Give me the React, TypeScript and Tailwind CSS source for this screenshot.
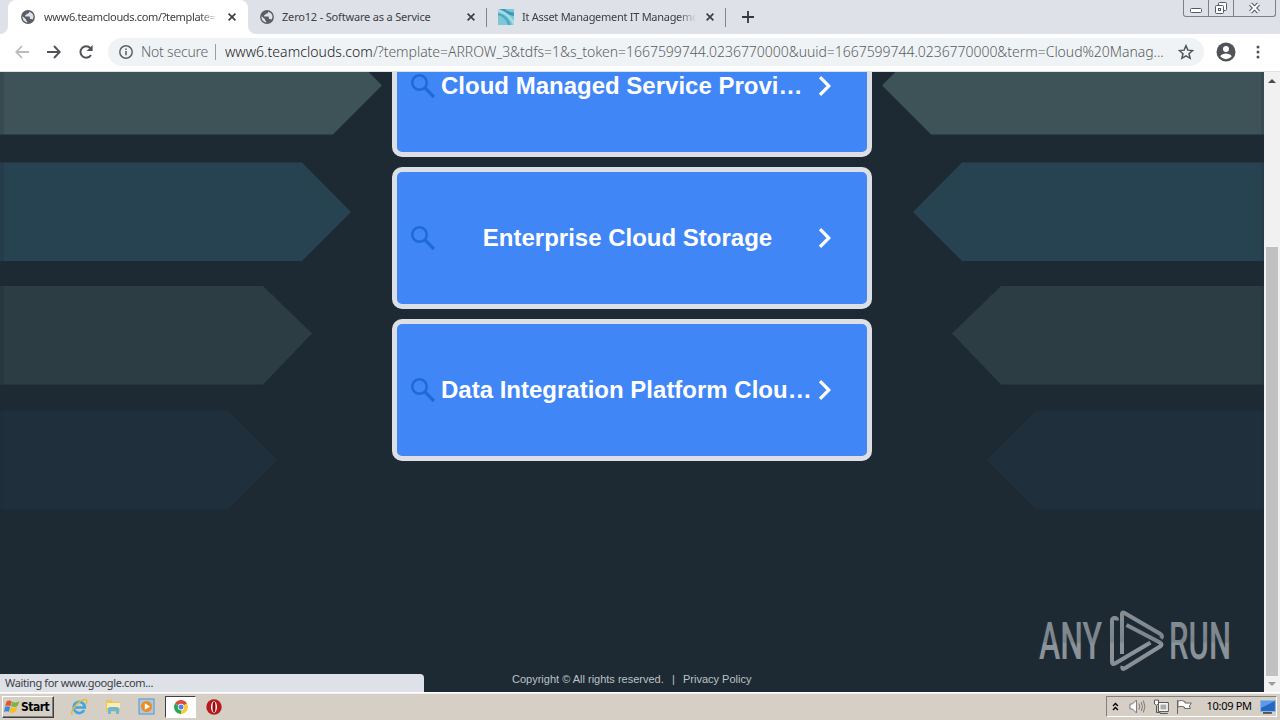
import { ReactNode } from "react";

const SHAPES = [
  { top: 36, bottom: 134.5, mid: 85.5, tip: 382, shoulder: 333, fill: "#3d5357" },
  { top: 162.5, bottom: 261, mid: 212, tip: 351, shoulder: 302, fill: "#274351" },
  { top: 286, bottom: 384.500, mid: 333.5, tip: 312, shoulder: 263, fill: "#2c3d43" },
  { top: 410.5, bottom: 509.5, mid: 460, tip: 277, shoulder: 228, fill: "#1f303c" }
];

const CARDS = [
  { title: "Cloud Managed Service Provi…", align: "text-left" },
  { title: "Enterprise Cloud Storage", align: "text-center" },
  { title: "Data Integration Platform Clou…", align: "text-left" }
];

function GlobeIcon() {
  return (
    <svg width="14" height="14" viewBox="0 0 14 14" className="shrink-0">
      <circle cx="7" cy="7" r="6.9" fill="#5a5e63" />
      <path d="M1.6 6.2 5 9.2v1l1.2 1v1.2C3.6 12.2 1.500 9.800 1.500 7zM8 1.700v.8c0 .8-.6 1.200-1.300 1.200H5.400v1.400H4.200v1.300h3.700c.7 0 1 .4 1 1V9h1.300c.5 0 .9.300 1.100.8.800-.9 1.200-2 1.200-3 0-2.400-1.900-4.700-4.500-5.100z" fill="#dfe2e8" />
    </svg>
  );
}

function CloseIcon() {
  return (
    <svg width="8" height="8" viewBox="0 0 8 8" className="shrink-0">
      <path d="M.6.600 7.400 7.400M7.400.600.600 7.400" stroke="#3c4043" strokeWidth="1.7" />
    </svg>
  );
}

function TabTitle({ children, className }: { children: ReactNode; className: string }) {
  return <span className={`overflow-hidden whitespace-nowrap text-[11px] text-[#3c4043] ${className}`}>{children}</span>;
}

function TabStrip() {
  return (
    <div className="flex h-[34px] bg-[#dee1e8]">
      <div className="flex w-2 items-end bg-white">
        <div className="h-full w-2 rounded-br-lg bg-[#dee1e8]" />
      </div>
      <div className="flex w-[240px] items-center rounded-t-lg bg-white pl-[13px]">
        <GlobeIcon />
        <TabTitle className="ml-[9px] w-[173px] tracking-[-0.35px] [mask-image:linear-gradient(90deg,#000_90%,transparent)]">
          www6.teamclouds.com/?template=ARROW_3
        </TabTitle>
        <span className="ml-[11px] flex">
          <CloseIcon />
        </span>
      </div>
      <div className="flex w-2 bg-white">
        <div className="h-full w-2 rounded-bl-lg bg-[#dee1e8]" />
      </div>
      <div className="flex w-[230px] items-center pl-1">
        <GlobeIcon />
        <TabTitle className="ml-[8px] w-[185px] tracking-[-0.18px]">Zero12 - Software as a Service</TabTitle>
        <CloseIcon />
      </div>
      <div className="mt-2 h-[19px] w-px bg-[#80848b]" />
      <div className="flex w-[238px] items-center pl-[11px]">
        <svg width="16" height="16" viewBox="0 0 16 16" className="shrink-0">
          <path d="M0 0h16v16H0z" fill="#7cc8d6" />
          <path d="M2 0c3 4 8 6 14 7V3.500C12 3 9 2 7 0z" fill="#3b9ab8" />
          <path d="M0 3c7 1 12 6 15 13h1v-4C12 6 7 2 0 0z" fill="#a9dce4" />
          <path d="M0 4c6 1 11 6 13 12h-3C8 10 5 7 0 6.500z" fill="#4aa9c3" />
        </svg>
        <TabTitle className="ml-[8px] w-[174px] tracking-[-0.28px] [mask-image:linear-gradient(90deg,#000_90%,transparent)]">
          It Asset Management IT Management
        </TabTitle>
        <span className="ml-[10px] flex">
          <CloseIcon />
        </span>
      </div>
      <div className="mt-2 h-[19px] w-px bg-[#80848b]" />
      <svg width="12" height="12" viewBox="0 0 12 12" className="mt-[11px] ml-4">
        <path d="M6 0v12M0 6h12" stroke="#34373c" strokeWidth="1.8" />
      </svg>
      <div className="mr-1 ml-auto flex h-[17px] w-[93px] self-start rounded-b-[3px] border border-t-0 border-[#7b808a]">
        <div className="flex w-[25px] justify-center border-r border-[#7b808a]">
          <svg width="12" height="16" viewBox="0 0 12 16">
            <rect x=".5" y="8.500" width="11" height="4" rx="1" fill="#fff" stroke="#555a64" />
          </svg>
        </div>
        <div className="flex w-[25px] justify-center border-r border-[#7b808a]">
          <svg width="14" height="16" viewBox="0 0 14 16">
            <rect x="4.500" y="2.500" width="8" height="8" rx="1" fill="#fff" stroke="#555a64" />
            <rect x="1.500" y="5.500" width="8" height="8" rx="1" fill="#fff" stroke="#555a64" />
            <rect x="4.500" y="8.500" width="2" height="2" fill="#fff" stroke="#555a64" />
          </svg>
        </div>
        <div className="flex grow justify-center">
          <svg width="13" height="16" viewBox="0 0 13 16">
            <path d="M2.500 4 10.500 12M10.500 4 2.500 12" stroke="#555a64" strokeWidth="4" />
            <path d="M2.500 4 10.500 12M10.500 4 2.500 12" stroke="#fff" strokeWidth="2" />
          </svg>
        </div>
      </div>
    </div>
  );
}

function Toolbar() {
  return (
    <div className="flex h-[38px] items-center border-b border-[#dfe2e5] bg-white pb-px">
      <svg width="14" height="14" viewBox="0 0 14 14" className="ml-[15px]" fill="none" stroke="#b9bbbe" strokeWidth="1.8">
        <path d="M14 7H1.500M7 1 1.300 7 7 13" />
      </svg>
      <svg width="14" height="14" viewBox="0 0 14 14" className="ml-[18px]" fill="none" stroke="#505357" strokeWidth="1.9">
        <path d="M0 7h12.500M7 1l5.700 6L7 13" />
      </svg>
      <svg width="16" height="16" viewBox="0 0 16 16" className="ml-[17px]">
        <path d="M13 11a5.700 5.700 0 1 1-.6-6.800" fill="none" stroke="#505357" strokeWidth="2" />
        <path d="M14.600 1v6H8.600z" fill="#505357" />
      </svg>
      <div className="ml-[14px] flex h-7 w-[1096px] items-center rounded-full bg-[#f0f3f5] pl-[11px]">
        <svg width="14" height="14" viewBox="0 0 14 14" fill="none" stroke="#5f6368" strokeWidth="1.5">
          <circle cx="7" cy="7" r="6.200" />
          <path d="M7 6v4.300M7 3.500v1.500" strokeWidth="1.600" />
        </svg>
        <span className="ml-2 w-[67px] pb-px text-[14px] font-light tracking-[-0.2px] whitespace-nowrap text-[#5f6368]">Not secure</span>
        <div className="ml-[7px] h-4 w-px bg-[#9a9da1]" />
        <span className="ml-[9px] w-[945px] pb-px text-[14px] font-light tracking-[-0.035px] whitespace-nowrap text-[#5a5e63]">
          <span className="tracking-[0.04px] text-[#202124]">www6.teamclouds.com</span>
          /?template=ARROW_3&amp;tdfs=1&amp;s_token=1667599744.0236770000&amp;uuid=1667599744.0236770000&amp;term=Cloud%20Manag...
        </span>
        <svg width="16" height="16" viewBox="0 0 24 24" className="ml-[8px]" fill="none" stroke="#505357" strokeWidth="2.200">
          <path d="m12 2.500 2.800 6.700 7.200.6-5.500 4.700 1.700 7L12 17.800l-6.200 3.700 1.700-7L2 9.800l7.200-.6z" />
        </svg>
      </div>
      <svg width="20" height="20" viewBox="0 0 20 20" className="ml-[12px]">
        <circle cx="10" cy="10" r="9.500" fill="#505357" />
        <circle cx="10" cy="7" r="3" fill="#fff" />
        <path d="M4.200 14.300c1.200-1.800 3.500-2.800 5.800-2.800s4.600 1 5.800 2.800A7 7 0 0 1 10 17.200a7 7 0 0 1-5.800-2.900z" fill="#fff" />
      </svg>
      <svg width="4" height="14" viewBox="0 0 4 14" className="ml-[20px]" fill="#505357">
        <circle cx="2" cy="2" r="1.500" />
        <circle cx="2" cy="7" r="1.500" />
        <circle cx="2" cy="12" r="1.500" />
      </svg>
    </div>
  );
}

function Backdrop() {
  return (
    <svg width="1264" height="620" viewBox="0 72 1264 620" className="[grid-area:1/1]">
      {SHAPES.map((s) => (
        <g key={s.top} fill={s.fill}>
          <path d={`M0 ${s.top}H${s.shoulder}L${s.tip} ${s.mid} ${s.shoulder} ${s.bottom}H0z`} />
          <path d={`M1264 ${s.top}H${1264 - s.shoulder}L${1264 - s.tip} ${s.mid} ${1264 - s.shoulder} ${s.bottom}H1264z`} />
          <path
            d={`M0 ${s.top}h4v${s.bottom - s.top}h-4zM1261 ${s.top}h3v${s.bottom - s.top}h-3z`}
            fill="#1e2a33"
            opacity=".2"
          />
        </g>
      ))}
    </svg>
  );
}

function Card({ title, align }: { title: string; align: string }) {
  return (
    <a className="flex h-[142px] w-[480px] shrink-0 items-center rounded-[10px] border-[5px] border-[#dcdfe6] bg-[#4086f6] pl-[13px]">
      <svg width="26" height="27" viewBox="0 0 26 27" fill="none" stroke="#2069d8" className="shrink-0">
        <circle cx="9.500" cy="9.500" r="7.300" strokeWidth="2.600" />
        <path d="m15 15 9 9" strokeWidth="3.200" />
      </svg>
      <span className={`ml-[5px] w-[373px] whitespace-nowrap font-['Liberation_Sans',sans-serif] text-2xl font-bold text-white ${align}`}>
        {title}
      </span>
      <svg width="14" height="20" viewBox="0 0 14 20" fill="none" stroke="#fff" strokeWidth="3.200" className="ml-[4px] shrink-0">
        <path d="m2 1.200 8.800 8.800L2 18.800" />
      </svg>
    </a>
  );
}

function Watermark() {
  return (
    <svg width="200" height="68" viewBox="1035 606 200 68" className="mt-[534px] mr-[29px] self-start justify-self-end [grid-area:1/1]">
      <defs>
        <linearGradient id="wm" x1="0" y1="606" x2="0" y2="674" gradientUnits="userSpaceOnUse">
          <stop offset=".2" stopColor="#858d93" />
          <stop offset=".52" stopColor="#79838a" />
          <stop offset=".56" stopColor="#8d959b" />
          <stop offset="1" stopColor="#858d93" />
        </linearGradient>
      </defs>
      <g fill="url(#wm)" fontFamily="Roboto, sans-serif" fontSize="52" fontWeight="500">
        <text x="1039" y="659" textLength="63" lengthAdjust="spacingAndGlyphs">ANY</text>
        <text x="1169" y="659" textLength="62" lengthAdjust="spacingAndGlyphs">RUN</text>
      </g>
      <g fill="none" stroke="url(#wm)" strokeWidth="4" strokeLinejoin="round">
        <path d="M1122 654V614Q1122 611.500 1124.500 613L1160.500 634Q1163 636 1161 638.500" />
        <path d="M1117 620.500Q1117 617.500 1114 618 1112 618.500 1112 621V662Q1112 665 1115 663.500L1150.500 642.500" />
        <path d="M1126.500 625 1160 642.500Q1163 644.500 1160 646.500L1124.500 668.500Q1121.500 670 1122.500 666" />
      </g>
    </svg>
  );
}

function Page() {
  return (
    <div className="flex h-[620px]">
      <main className="grid w-[1264px] grid-cols-1 grid-rows-1 overflow-hidden bg-[#1e2a33]">
        <Backdrop />
        <div className="flex h-[620px] flex-col items-center overflow-hidden [grid-area:1/1]">
          <div className="-mt-[57px] flex flex-col gap-[10px]">
            {CARDS.map((c) => (
              <Card key={c.title} title={c.title} align={c.align} />
            ))}
          </div>
          <footer className="mt-auto mb-[5px] flex h-4 w-[240px] items-center whitespace-nowrap font-['Liberation_Sans',sans-serif] text-[11px] text-[#bcc2c7]">
            <span className="w-[160px]">Copyright © All rights reserved.</span>
            <span className="w-[11px]">|</span>
            <span>Privacy Policy</span>
          </footer>
        </div>
        <Watermark />
        <div className="z-10 h-[18px] w-[424px] self-end rounded-tr-[4px] bg-[#dee1e8] pl-[5px] text-[11px] leading-[18px] tracking-[-0.36px] text-[#3c4043] [grid-area:1/1]">
          Waiting for www.google.com...
        </div>
      </main>
      <div className="flex w-4 flex-col items-center bg-[#f1f1f1]">
        <svg width="8" height="4" viewBox="0 0 8 4" className="mt-[7px]">
          <path d="M0 4 4 0l4 4z" fill="#4b4e51" />
        </svg>
        <div className="mt-auto h-[429px] w-3 bg-[#c1c1c1]" />
        <svg width="8" height="4" viewBox="0 0 8 4" className="mt-[6px] mb-[6px]">
          <path d="M0 0h8L4 4z" fill="#9a9a9a" />
        </svg>
      </div>
    </div>
  );
}

function Taskbar() {
  return (
    <div className="flex h-7 items-center border-t border-white bg-[#d5cfc6] text-black shadow-[inset_0_1px_0_#f3f1ee]">
      <button className="ml-[2px] flex h-[22px] w-[52px] items-center border border-[#404040] border-t-white border-l-white pl-px shadow-[inset_-1px_-1px_0_#808080]">
        <svg width="16" height="15" viewBox="0 0 16 15" className="shrink-0">
          <path d="M2.500 2.500C4.500 1 6 1.500 7.800 2.500L6.400 7.300C4.500 6.300 3 6.300 1.200 7.300z" fill="#e2572b" />
          <path d="M8.400 2.800c2 1 4 1 7-.8L13.600 7c-2 1.400-4.400 1.200-6.600.3z" fill="#7db43a" />
          <path d="M1 8c2-1.200 3.500-.9 5.200 0L4.800 12.800C3 11.800 1.500 12 0 13z" fill="#3a8ad8" />
          <path d="M6.800 8.200c2 1 4.400 1 6.400-.4l-1.500 5c-2 1.500-4.200 1.300-6.300.2z" fill="#f5bd2c" />
        </svg>
        <span className="ml-[1px] font-['DejaVu_Sans_Condensed','DejaVu_Sans',sans-serif] text-[12px] leading-none font-bold tracking-[-0.5px]">Start</span>
      </button>
      <svg width="18" height="18" viewBox="0 0 18 18" className="ml-[16px]" fill="none">
        <path d="M14.200 12A5.600 5.600 0 1 1 14.800 9.500H5" stroke="#3fa6e0" strokeWidth="2.600" />
        <path d="M2.500 16.500C-1.500 15 9 1 15.500 1.500c2 .5 1.500 3 .5 4.500" stroke="#e9b93b" strokeWidth="1.400" />
      </svg>
      <svg width="17" height="17" viewBox="0 0 17 17" className="ml-[17px]">
        <path d="M1 2h6l1 2h7v10H1z" fill="#e9c75d" />
        <path d="M2 5h13v5H2z" fill="#fbeeb0" />
        <path d="M3 16v-5q0-2 2-2h7q2 0 2 2v5h-3v-3H6v3z" fill="#6bb6df" />
      </svg>
      <svg width="17" height="17" viewBox="0 0 17 17" className="ml-[16px]">
        <rect x="1" y="1" width="15" height="15" fill="#a5cbe8" stroke="#5b94bf" />
        <circle cx="8.500" cy="8.500" r="5.500" fill="#f28a1d" />
        <path d="M6.800 5.300 12 8.500l-5.200 3.200z" fill="#fff" />
      </svg>
      <div className="ml-[10px] flex h-[22px] w-[31px] items-center justify-center border border-white border-t-[#404040] border-l-[#404040] bg-white">
        <svg width="14" height="14" viewBox="0 0 14 14">
          <path d="M7 7 .95 3.500A7 7 0 0 1 13.050 3.500z" fill="#dd4b3b" />
          <path d="M7 7 .95 3.500A7 7 0 0 0 7 14z" fill="#2ea455" />
          <path d="M7 7 13.050 3.500A7 7 0 0 1 7 14z" fill="#fbcb35" />
          <circle cx="7" cy="7" r="3.200" fill="#fff" />
          <circle cx="7" cy="7" r="2.500" fill="#4a84ee" />
        </svg>
      </div>
      <svg width="16" height="16" viewBox="0 0 16 16" className="ml-[10px]">
        <circle cx="8" cy="8" r="7.700" fill="#b9191d" />
        <ellipse cx="8" cy="8" rx="3" ry="5.800" fill="#fff" />
        <ellipse cx="8" cy="8" rx="1.500" ry="5.300" fill="#8d0d10" />
      </svg>
      <div className="mr-[3px] ml-auto flex h-[21px] w-[171px] items-center border border-white border-t-[#808080] border-l-[#808080] pl-[5px]">
        <svg width="7" height="9" viewBox="0 0 7 9" fill="none" stroke="#000" strokeWidth="1.400">
          <path d="M1 4 3.500 1.500 6 4M1 8l2.500-2.500L6 8" />
        </svg>
        <svg width="17" height="15" viewBox="0 0 17 15" className="ml-[10px]" fill="none" stroke="#777">
          <path d="M1 5h2.500l4-4v13l-4-4H1z" fill="#fff" />
          <path d="M10 4.500q1.600 3 0 6M12.300 3q2.600 4.500 0 9M14.500 1.500q3 6 0 12" />
        </svg>
        <svg width="17" height="16" viewBox="0 0 17 16" className="ml-[7px]" fill="#fff" stroke="#555">
          <path d="M5.500 3.500h10v9h-10z" />
          <path d="M7.500 5.500h6v5h-6z" fill="#aaa" stroke="none" />
          <path d="M7 14.500h8M3.500 7v6.500h4" fill="none" />
          <path d="M1.500 1v4q2 2.500 4 0V1z" />
        </svg>
        <svg width="17" height="16" viewBox="0 0 17 16" className="ml-[6px]" fill="#fff" stroke="#666">
          <path d="M1.500 15V1" />
          <path d="M2 2q4-1.500 7 .5v1.500h6.500l-2 3 1 2.500H8.500V8Q5 6.500 2 8z" />
        </svg>
        <span className="ml-[14px] w-[47px] text-[11px] tracking-[-0.3px] whitespace-nowrap">10:09 PM</span>
        <svg width="16" height="14" viewBox="0 0 16 14" className="ml-[7px]">
          <path d="M.5.500h15v11H.5z" fill="#2767c0" stroke="#8fb8e6" />
          <path d="M1 1h14L1 8z" fill="#5a9be8" />
          <path d="M3 13h9" stroke="#333" strokeWidth="1.500" />
        </svg>
      </div>
    </div>
  );
}

export default function App() {
  return (
    <div className="flex h-[720px] w-[1280px] flex-col overflow-hidden font-['Noto_Sans',sans-serif]">
      <TabStrip />
      <Toolbar />
      <Page />
      <Taskbar />
    </div>
  );
}
